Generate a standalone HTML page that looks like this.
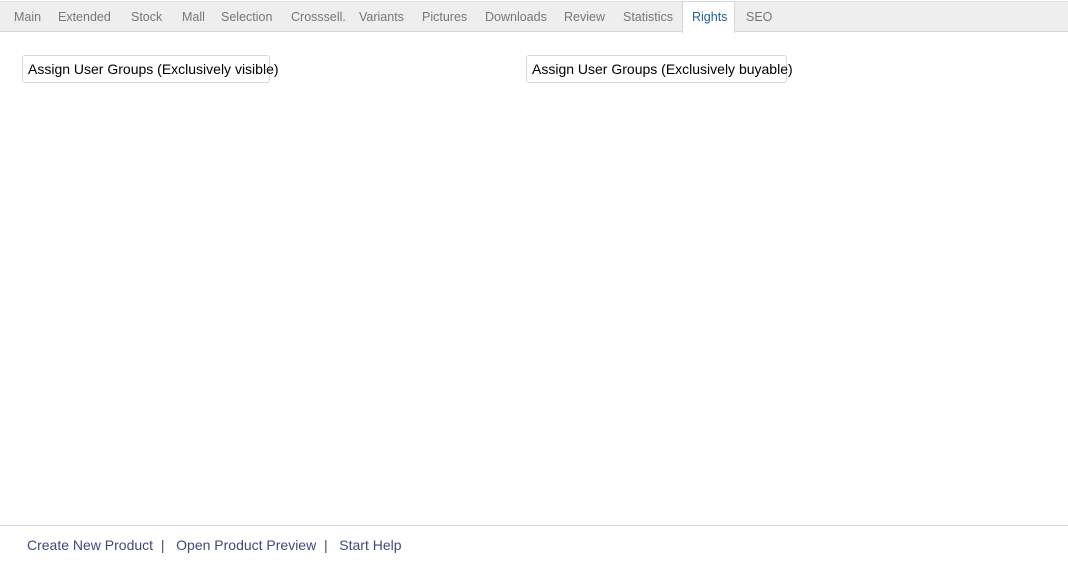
<!DOCTYPE html>
<html><head><meta charset="utf-8"><style>
body{margin:0;width:1068px;height:564px;background:#fff;font-family:"Liberation Sans",sans-serif;position:relative;overflow:hidden}
.bar{position:absolute;left:0;top:1px;width:1068px;height:31px;background:#eeeeee;border-top:1px solid #e2e2e2;border-bottom:1px solid #d6d6d6;box-sizing:border-box}
.t{position:absolute;top:10px;font-size:12.5px;color:#777;white-space:nowrap}
.act{position:absolute;left:682px;top:1px;width:53px;height:32px;background:#fff;border:1px solid #d6d6d6;border-bottom:none;box-sizing:border-box}
.btn{position:absolute;top:55px;height:28px;border:1px solid #d8d8d8;border-radius:3px;box-sizing:border-box;font-size:14px;line-height:26px;padding:0 5px;color:#000;white-space:nowrap}
.foot{position:absolute;left:0;top:525px;width:1068px;border-top:1px solid #dcdcdc;box-shadow:0 -2px 3px rgba(0,0,0,0.04)}
.f{position:absolute;top:537px;left:27px;font-size:14px;color:#3e4a7a;white-space:nowrap;word-spacing:0}
</style></head><body>
<div class="bar"></div>
<div class="act"></div>
<span class="t" style="left:14px">Main</span>
<span class="t" style="left:58px">Extended</span>
<span class="t" style="left:131px">Stock</span>
<span class="t" style="left:182px">Mall</span>
<span class="t" style="left:221px">Selection</span>
<span class="t" style="left:291px">Crosssell.</span>
<span class="t" style="left:359px">Variants</span>
<span class="t" style="left:422px">Pictures</span>
<span class="t" style="left:485px">Downloads</span>
<span class="t" style="left:564px">Review</span>
<span class="t" style="left:623px">Statistics</span>
<span class="t" style="left:692px;color:#1f5f95">Rights</span>
<span class="t" style="left:746px">SEO</span>
<div class="btn" style="left:22px;width:248px">Assign User Groups (Exclusively visible)</div>
<div class="btn" style="left:526px;width:261px">Assign User Groups (Exclusively buyable)</div>
<div class="foot"></div>
<div class="f">Create New Product &nbsp;|&nbsp;&nbsp; Open Product Preview &nbsp;|&nbsp;&nbsp; Start Help</div>
</body></html>
